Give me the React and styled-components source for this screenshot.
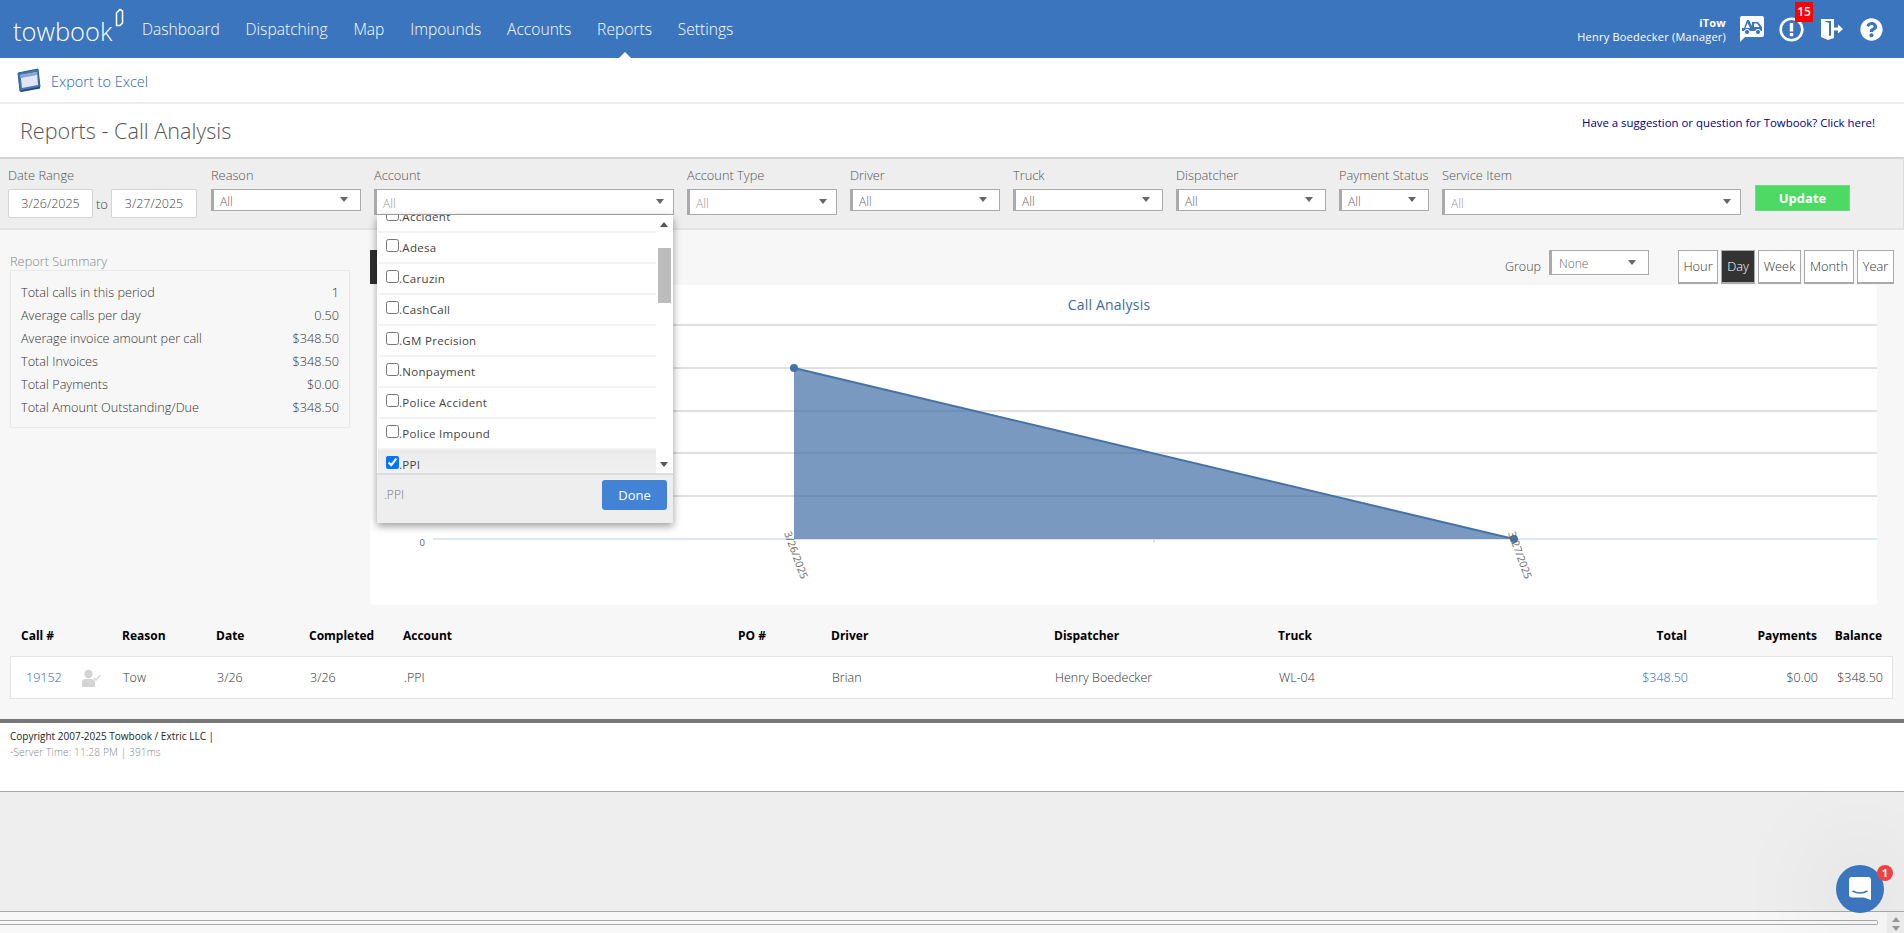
import styled, { createGlobalStyle } from "styled-components";
import { FaQuestionCircle } from "react-icons/fa";

const GlobalStyle = createGlobalStyle`
  html, body {
    margin: 0;
    padding: 0;
    background: #eee;
    font-family: "Open Sans", "Liberation Sans", sans-serif;
    color: #444;
  }
  * { box-sizing: border-box; }
`;

const Page = styled.div`
  display: flex;
  flex-direction: column;
  width: 1904px;
  height: 933px;
  overflow: hidden;
`;

/* top navigation */
const NavBar = styled.div`
  display: flex;
  align-items: center;
  height: 58px;
  flex: none;
  background: #3b75bd;
  color: #fff;
  padding-left: 13px;
`;

const Logo = styled.div`
  display: flex;
  align-items: flex-start;
  width: 129px;
  font-size: 25.5px;
  font-weight: 300;
  line-height: 40px;
  margin-top: 4px;
`;

const NavItem = styled.a`
  position: relative;
  font-size: 15.6px;
  font-weight: 300;
  margin-right: 25.8px;
  line-height: 58px;
  ${(p) =>
    p.$active &&
    `&::after {
      content: "";
      position: absolute;
      left: 50%;
      bottom: 0;
      margin-left: -6px;
      border: 6px solid transparent;
      border-top: 0;
      border-bottom-color: #fff;
    }`}
`;

const UserBlock = styled.div`
  margin-left: auto;
  text-align: right;
  font-size: 11px;
  line-height: 14px;
  margin-right: 14px;
  margin-top: 1px;
  letter-spacing: 0.22px;
`;

const UserCompany = styled.div`
  font-weight: 700;
  font-size: 11px;
`;

const NavIcons = styled.div`
  display: flex;
  align-items: center;
  gap: 17px;
  padding-right: 21px;
`;

const IconSlot = styled.div`
  position: relative;
  display: flex;
  height: 26px;
  align-items: center;
  margin-right: ${(p) => p.$pull || 0}px;
`;

const CountBadge = styled.span`
  position: absolute;
  left: 16px;
  top: -14px;
  width: 18px;
  height: 20px;
  background: #f00;
  color: #fff;
  font-size: 12px;
  font-weight: 600;
  line-height: 20px;
  text-align: center;
`;

/* export row and title */
const ExportBar = styled.div`
  display: flex;
  align-items: center;
  height: 46px;
  flex: none;
  background: #fff;
  border-bottom: 2px solid #eee;
  padding-left: 17px;
  gap: 10px;
`;

const ExportLink = styled.a`
  color: #1f64b8;
  font-size: 14.5px;
  font-weight: 300;
  margin-top: 3px;
`;

const TitleRow = styled.div`
  display: flex;
  justify-content: space-between;
  height: 53px;
  flex: none;
  background: #fff;
  padding: 0 29px 0 20px;
`;

const PageTitle = styled.h1`
  margin: 11px 0 0;
  font-size: 21.6px;
  font-weight: 300;
  line-height: 32px;
  color: #555;
`;

const SuggestLink = styled.a`
  margin-top: 10px;
  font-size: 11.4px;
  line-height: 18px;
  color: #000080;
`;

/* filters */
const FilterBar = styled.div`
  display: flex;
  align-items: flex-start;
  gap: 13px;
  height: 73px;
  flex: none;
  background: #eee;
  border-top: 2px solid #d4d4d4;
  border-bottom: 2px solid #e2e2e2;
  border-right: 1px solid #ddd;
  padding: 6px 0 0 8px;
`;

const Field = styled.div`
  position: relative;
  width: ${(p) => p.$width}px;
`;

const FieldLabel = styled.div`
  font-size: 12.8px;
  font-weight: 300;
  line-height: 20px;
  color: #555;
  margin-bottom: 4px;
  white-space: nowrap;
`;

const DateRow = styled.div`
  display: flex;
  align-items: center;
  gap: 3px;
  font-size: 13px;
  font-weight: 300;
`;

const DateBox = styled.div`
  width: ${(p) => p.$width}px;
  height: 29px;
  background: #fff;
  border: 1px solid #d4d4d4;
  border-radius: 2px;
  font-size: 12.5px;
  font-weight: 300;
  line-height: 27px;
  text-align: center;
  color: #444;
`;

const Select = styled.div`
  display: flex;
  align-items: center;
  justify-content: space-between;
  height: ${(p) => p.$height || 22}px;
  background: #fff;
  border: 1px solid #aaa;
  border-left-width: 3px;
  padding: 2px ${(p) => (p.$height === 26 ? 9 : 12)}px 0 6px;
  font-size: 12px;
  font-weight: 300;
  color: ${(p) => (p.$dark ? "#666" : "#999")};
  &::after {
    content: "";
    margin-top: -3px;
    border: 4px solid transparent;
    border-top: 5px solid #666;
    border-bottom: 0;
  }
`;

const UpdateButton = styled.button`
  width: 95px;
  height: 26px;
  margin: 20px 0 0 1px;
  background: #4cd964;
  border: 1px solid #6fdc85;
  color: #fff;
  font-family: inherit;
  font-size: 13px;
  font-weight: 700;
  padding: 0;
`;

/* account dropdown */
const Dropdown = styled.div`
  position: absolute;
  top: 50px;
  left: 3px;
  width: 296px;
  height: 308px;
  background: #fff;
  box-shadow: 0 3px 8px rgba(0, 0, 0, 0.4);
  z-index: 5;
  display: flex;
  flex-direction: column;
`;

const DropBody = styled.div`
  display: flex;
  height: 258px;
  overflow: hidden;
`;

const DropList = styled.div`
  flex: 1;
  margin-top: -13px;
  padding-left: 1px;
`;

const DropItem = styled.label`
  display: flex;
  align-items: flex-start;
  height: 31px;
  padding: 6px 0 0 8px;
  border-bottom: 2px solid #f3f3f3;
  font-size: 11.5px;
  line-height: 18px;
  font-weight: 400;
  letter-spacing: 0.3px;
  color: #444;
  background: ${(p) => (p.$selected ? "linear-gradient(#ebebeb, #f2f2f2)" : "#fff")};
`;

const DropCheck = styled.input`
  width: 13px;
  height: 13px;
  margin: 0;
  flex: none;
`;

const ScrollRail = styled.div`
  position: relative;
  width: 17px;
  flex: none;
`;

const ScrollArrow = styled.span`
  position: absolute;
  left: 4px;
  ${(p) =>
    p.$down
      ? "bottom: 6px; border-top: 5px solid #555;"
      : "top: 7px; border-bottom: 5px solid #555;"}
  border-left: 4px solid transparent;
  border-right: 4px solid transparent;
`;

const ScrollThumb = styled.div`
  position: absolute;
  left: 2px;
  top: 33px;
  width: 13px;
  height: 55px;
  background: #bcbcbc;
`;

const DropFooter = styled.div`
  display: flex;
  align-items: flex-start;
  justify-content: space-between;
  flex: 1;
  background: #eee;
  border-top: 2px solid #ddd;
  padding: 5px 6px 0 7px;
  font-size: 12px;
  font-weight: 300;
  color: #777;
`;

const SelectedText = styled.span`
  line-height: 30px;
`;

const DoneButton = styled.button`
  width: 65px;
  height: 30px;
  background: #4283d6;
  border: 0;
  border-radius: 3px;
  color: #fff;
  font-family: inherit;
  font-size: 13px;
  padding: 0;
`;

/* report area */
const Content = styled.div`
  background: #f7f7f7;
  flex: none;
`;

const Main = styled.div`
  display: flex;
  padding: 20px 10px 0 10px;
`;

const SummaryColumn = styled.div`
  width: 340px;
  margin-right: 20px;
  flex: none;
`;

const SummaryTitle = styled.div`
  font-size: 12.8px;
  font-weight: 300;
  line-height: 18px;
  margin-top: 2px;
  color: #888;
`;

const SummaryBox = styled.div`
  border: 1px solid #eaeaea;
  height: 158px;
  padding: 10px 10px 0;
`;

const SummaryRow = styled.div`
  display: flex;
  justify-content: space-between;
  height: 23px;
  font-size: 12.7px;
  font-weight: 300;
  line-height: 23px;
  color: #333;
`;

const ChartColumn = styled.div`
  flex: 1;
`;

const ChartToolbar = styled.div`
  display: flex;
  align-items: flex-start;
  height: 35px;
`;

const ViewTab = styled.div`
  width: 90px;
  height: 34px;
  background: #2f2f2f;
`;

const GroupLabel = styled.span`
  margin-left: auto;
  margin-right: 8px;
  margin-top: 8px;
  font-size: 12.5px;
  line-height: 18px;
  font-weight: 300;
  color: #444;
`;

const GroupSelect = styled(Select)`
  width: 100px;
  margin-right: 29px;
  padding-left: 7px;
`;

const RangeGroup = styled.div`
  display: flex;
  gap: 3px;
`;

const RangeButton = styled.button`
  width: ${(p) => p.$width}px;
  height: 34px;
  padding: 0 0 2px;
  font-family: inherit;
  font-size: 12.8px;
  font-weight: 300;
  background: ${(p) => (p.$active ? "#333" : "#fff")};
  color: ${(p) => (p.$active ? "#fff" : "#333")};
  border: 1px solid #aaa;
  border-bottom-width: 2px;
`;

const ChartPanel = styled.div`
  width: 1507px;
  height: 320px;
  background: #fff;
  border-radius: 4px;
`;

/* calls table */
const TableWrap = styled.div`
  padding: 21px 11px 20px 10px;
`;

const rowGrid = `
  display: grid;
  grid-template-columns: 60px 41px 94px 93px 94px 335px 93px 223px 224px 322px 87px 130px 65px;
  padding: 0 10px 0 11px;
`;

const HeaderRow = styled.div`
  ${rowGrid}
  height: 30px;
  font-size: 12px;
  font-weight: 700;
  line-height: 20px;
  color: #000;
`;

const DataRow = styled.div`
  ${rowGrid}
  align-items: center;
  height: 43px;
  background: #fff;
  border: 1px solid #e3e3e3;
  font-size: 12.5px;
  font-weight: 300;
  color: #333;
`;

const Num = styled.span`
  text-align: right;
`;

const CallLink = styled.a`
  color: #2a68b5;
  padding-left: ${(p) => (p.$pad ? 4 : 0)}px;
`;

/* footer */
const Footer = styled.div`
  height: 73px;
  flex: none;
  background: #fff;
  border-top: 4px solid #777;
  border-bottom: 1px solid #aaa;
  padding: 5px 0 0 10px;
`;

const Copyright = styled.div`
  font-size: 10px;
  line-height: 16px;
  color: #222;
`;

const ServerTime = styled.div`
  font-size: 10.2px;
  font-weight: 300;
  line-height: 16px;
  letter-spacing: 0.1px;
  color: #888;
`;

const Filler = styled.div`
  flex: 1;
  background: #eee;
`;

const BottomBar = styled.div`
  display: flex;
  height: 22px;
  flex: none;
  background: #f8f8f8;
  border-top: 1px solid #aaa;
`;

const BottomTrack = styled.div`
  flex: 1;
  height: 5px;
  margin: 8px 9px 0 0;
  border: 1px solid #aaa;
  border-left: 0;
  border-radius: 0 2px 2px 0;
`;

const BottomArrows = styled.div`
  display: flex;
  flex-direction: column;
  align-items: center;
  gap: 4px;
  width: 17px;
  padding-top: 5px;
  background: #eee;
`;

const BottomArrow = styled.span`
  border-left: 4px solid transparent;
  border-right: 4px solid transparent;
  ${(p) => (p.$down ? "border-top: 5px solid #999;" : "border-bottom: 5px solid #999;")}
`;

/* chat launcher */
const Launcher = styled.div`
  position: fixed;
  left: 1836px;
  top: 865px;
  width: 48px;
  height: 48px;
  border-radius: 50%;
  background: #3b75bd;
  display: flex;
  align-items: center;
  justify-content: center;
  box-shadow: 0 0 90px 40px rgba(0, 0, 0, 0.035);
  z-index: 10;
`;

const LauncherBadge = styled.span`
  position: absolute;
  right: -9px;
  top: 0;
  width: 16px;
  height: 16px;
  border-radius: 50%;
  background: #f04242;
  color: #fff;
  font-size: 11px;
  font-weight: 700;
  line-height: 16px;
  text-align: center;
`;

const BookMark = () => (
  <svg width="9" height="20" viewBox="0 0 9 20" style={{ marginTop: -3, marginLeft: 3 }}>
    <path d="M1.5 5 L5 1.5 L7.5 3 V15 L5 17.5 H1.5 Z" fill="none" stroke="#fff" strokeWidth="1.5" />
  </svg>
);

const TowIcon = () => (
  <svg width="24" height="26" viewBox="0 0 24 26">
    <path d="M2 0 H22 Q24 0 24 2 V19 Q24 21 22 21 H5 L0 26 V2 Q0 0 2 0 Z" fill="#fff" />
    <path d="M2 15 V12 H4 L7 4 H9 L12 10 V6 H18 L22 11 V15 Z" fill="#3b75bd" />
    <path d="M14 7.5 H17 L19.5 11 H14 Z" fill="#fff" />
    <path d="M7.5 7 L10 12 H5.5 Z" fill="#fff" />
    <circle cx="7" cy="16" r="2.6" fill="#3b75bd" stroke="#fff" />
    <circle cx="18" cy="16" r="2.6" fill="#3b75bd" stroke="#fff" />
  </svg>
);

const AlertIcon = () => (
  <svg width="25" height="25" viewBox="0 0 25 25">
    <circle cx="12.5" cy="12.5" r="10.8" fill="none" stroke="#fff" strokeWidth="2.6" />
    <rect x="10.8" y="6" width="3.4" height="8.5" fill="#fff" />
    <rect x="10.8" y="16" width="3.4" height="3.2" fill="#fff" />
  </svg>
);

const ExitIcon = () => (
  <svg width="22" height="22" viewBox="0 0 22 22">
    <path d="M0 1 H13 V20 L7 22 L0 19 Z M10 3 H3 L8 5 V18 L10 17.5 Z" fill="#fff" fillRule="evenodd" />
    <path d="M12 9.5 H17 V6.5 L22 11 L17 15.5 V12.5 H12 Z" fill="#fff" />
  </svg>
);

const ExcelIcon = () => (
  <svg width="24" height="24" viewBox="0 0 24 24">
    <path d="M1 5 L21 1 L23 19 L3 23 Z" fill="#3f78b5" stroke="#2d5c8f" />
    <path d="M3.5 7 L20 4 L21 17 L5 20 Z" fill="#e3e4f4" />
    <path d="M3.5 7 L20 4 L20.3 7 L4 10 Z" fill="#8aa6cf" />
    <path d="M3 23 L23 19 L23 20.5 L4 24 Z" fill="#1e3f66" />
  </svg>
);

const AssignedIcon = () => (
  <svg width="19" height="18" viewBox="0 0 19 18">
    <circle cx="6.5" cy="5" r="4.2" fill="#d4d4d4" />
    <path d="M0 18 V13 Q0 10 4 10 H9 Q13 10 13 13 V18 Z" fill="#d4d4d4" />
    <path d="M12 9 L14 11 L18.5 6" fill="none" stroke="#d4d4d4" strokeWidth="1.4" />
  </svg>
);

const ChatIcon = () => (
  <svg width="22" height="24" viewBox="0 0 22 24">
    <path d="M3 0 H19 Q22 0 22 3 V23 L15 20.5 H3 Q0 20.5 0 17.5 V3 Q0 0 3 0 Z" fill="#fff" />
    <path d="M3.5 14 Q11 18 18.5 14" fill="none" stroke="#3b75bd" strokeWidth="1.5" />
  </svg>
);

const gridLines = [40, 83, 126, 168, 211];
const CHART_LEFT = 63;
const CHART_RIGHT = 1507;
const BASE_Y = 254;

const AnalysisChart = () => (
  <svg width="1507" height="320" viewBox="0 0 1507 320" fontFamily="'Open Sans', sans-serif">
    <text x="739" y="25" textAnchor="middle" fontSize="14" letterSpacing="0.2" fill="#3e6a9a">Call Analysis</text>
    {gridLines.map((y) => (
      <line key={y} x1={CHART_LEFT} x2={CHART_RIGHT} y1={y} y2={y} stroke="#c0c0c0" />
    ))}
    <line x1={CHART_LEFT} x2={CHART_RIGHT} y1={BASE_Y} y2={BASE_Y} stroke="#c0d0e0" />
    <line x1="784" x2="784" y1={BASE_Y} y2={BASE_Y + 4} stroke="#c0d0e0" />
    <path d="M424 83 L1144 254 L424 254 Z" fill="#4572a7" fillOpacity="0.72" />
    <path d="M424 83 L1144 254" fill="none" stroke="#4572a7" strokeWidth="2" />
    <circle cx="424" cy="83" r="4" fill="#4572a7" />
    <circle cx="1144" cy="254" r="4" fill="#4572a7" />
    <text x="55" y="261" textAnchor="end" fontSize="9.5" fill="#666">0</text>
    <text transform="translate(414 248) rotate(70)" fontSize="10.5" fill="#666">3/26/2025</text>
    <text transform="translate(1138 248) rotate(70)" fontSize="10.5" fill="#666">3/27/2025</text>
  </svg>
);

const accounts = [
  ".Accident",
  ".Adesa",
  ".Caruzin",
  ".CashCall",
  ".GM Precision",
  ".Nonpayment",
  ".Police Accident",
  ".Police Impound",
  ".PPI",
];

const summary = [
  ["Total calls in this period", "1"],
  ["Average calls per day", "0.50"],
  ["Average invoice amount per call", "$348.50"],
  ["Total Invoices", "$348.50"],
  ["Total Payments", "$0.00"],
  ["Total Amount Outstanding/Due", "$348.50"],
];

const ranges = [
  ["Hour", 40],
  ["Day", 34],
  ["Week", 43],
  ["Month", 50],
  ["Year", 37],
];

const App = () => {
  return (
    <Page>
      <GlobalStyle />
      <NavBar>
        <Logo>
          towbook
          <BookMark />
        </Logo>
        <NavItem>Dashboard</NavItem>
        <NavItem>Dispatching</NavItem>
        <NavItem>Map</NavItem>
        <NavItem>Impounds</NavItem>
        <NavItem>Accounts</NavItem>
        <NavItem $active>Reports</NavItem>
        <NavItem>Settings</NavItem>
        <UserBlock>
          <UserCompany>iTow</UserCompany>
          Henry Boedecker (Manager)
        </UserBlock>
        <NavIcons>
          <IconSlot $pull={-2}><TowIcon /></IconSlot>
          <IconSlot>
            <AlertIcon />
            <CountBadge>15</CountBadge>
          </IconSlot>
          <IconSlot><ExitIcon /></IconSlot>
          <IconSlot><FaQuestionCircle size={23} color="#fff" /></IconSlot>
        </NavIcons>
      </NavBar>

      <ExportBar>
        <ExcelIcon />
        <ExportLink>Export to Excel</ExportLink>
      </ExportBar>

      <TitleRow>
        <PageTitle>Reports - Call Analysis</PageTitle>
        <SuggestLink>Have a suggestion or question for Towbook? Click here!</SuggestLink>
      </TitleRow>

      <FilterBar>
        <Field $width={190}>
          <FieldLabel>Date Range</FieldLabel>
          <DateRow>
            <DateBox $width={85}>3/26/2025</DateBox>
            <span>to</span>
            <DateBox $width={86}>3/27/2025</DateBox>
          </DateRow>
        </Field>
        <Field $width={150}>
          <FieldLabel>Reason</FieldLabel>
          <Select $dark>All</Select>
        </Field>
        <Field $width={300}>
          <FieldLabel>Account</FieldLabel>
          <Select $height={26}>All</Select>
          <Dropdown>
            <DropBody>
              <DropList>
                {accounts.map((name) => (
                  <DropItem key={name} $selected={name === ".PPI"}>
                    <DropCheck type="checkbox" readOnly checked={name === ".PPI"} />
                    {name}
                  </DropItem>
                ))}
              </DropList>
              <ScrollRail>
                <ScrollArrow />
                <ScrollThumb />
                <ScrollArrow $down />
              </ScrollRail>
            </DropBody>
            <DropFooter>
              <SelectedText>.PPI</SelectedText>
              <DoneButton>Done</DoneButton>
            </DropFooter>
          </Dropdown>
        </Field>
        <Field $width={150}>
          <FieldLabel>Account Type</FieldLabel>
          <Select $height={26}>All</Select>
        </Field>
        <Field $width={150}>
          <FieldLabel>Driver</FieldLabel>
          <Select $dark>All</Select>
        </Field>
        <Field $width={150}>
          <FieldLabel>Truck</FieldLabel>
          <Select $dark>All</Select>
        </Field>
        <Field $width={150}>
          <FieldLabel>Dispatcher</FieldLabel>
          <Select $dark>All</Select>
        </Field>
        <Field $width={90}>
          <FieldLabel>Payment Status</FieldLabel>
          <Select $dark>All</Select>
        </Field>
        <Field $width={299}>
          <FieldLabel>Service Item</FieldLabel>
          <Select $height={26}>All</Select>
        </Field>
        <UpdateButton>Update</UpdateButton>
      </FilterBar>

      <Content>
        <Main>
          <SummaryColumn>
            <SummaryTitle>Report Summary</SummaryTitle>
            <SummaryBox>
              {summary.map(([label, value]) => (
                <SummaryRow key={label}>
                  <span>{label}</span>
                  <span>{value}</span>
                </SummaryRow>
              ))}
            </SummaryBox>
          </SummaryColumn>
          <ChartColumn>
            <ChartToolbar>
              <ViewTab />
              <GroupLabel>Group</GroupLabel>
              <GroupSelect $height={25} $dark>None</GroupSelect>
              <RangeGroup>
                {ranges.map(([label, width]) => (
                  <RangeButton key={label} $width={width} $active={label === "Day"}>
                    {label}
                  </RangeButton>
                ))}
              </RangeGroup>
            </ChartToolbar>
            <ChartPanel>
              <AnalysisChart />
            </ChartPanel>
          </ChartColumn>
        </Main>

        <TableWrap>
          <HeaderRow>
            <span>Call #</span>
            <span />
            <span>Reason</span>
            <span>Date</span>
            <span>Completed</span>
            <span>Account</span>
            <span>PO #</span>
            <span>Driver</span>
            <span>Dispatcher</span>
            <span>Truck</span>
            <Num>Total</Num>
            <Num>Payments</Num>
            <Num>Balance</Num>
          </HeaderRow>
          <DataRow>
            <CallLink $pad>19152</CallLink>
            <AssignedIcon />
            <span>Tow</span>
            <span>3/26</span>
            <span>3/26</span>
            <span>.PPI</span>
            <span />
            <span>Brian</span>
            <span>Henry Boedecker</span>
            <span>WL-04</span>
            <Num><CallLink>$348.50</CallLink></Num>
            <Num>$0.00</Num>
            <Num>$348.50</Num>
          </DataRow>
        </TableWrap>
      </Content>

      <Footer>
        <Copyright>Copyright 2007-2025 Towbook / Extric LLC |</Copyright>
        <ServerTime>-Server Time: 11:28 PM | 391ms</ServerTime>
      </Footer>
      <Filler />
      <BottomBar>
        <BottomTrack />
        <BottomArrows>
          <BottomArrow />
          <BottomArrow $down />
        </BottomArrows>
      </BottomBar>

      <Launcher>
        <ChatIcon />
        <LauncherBadge>1</LauncherBadge>
      </Launcher>
    </Page>
  );
};

export default App;
